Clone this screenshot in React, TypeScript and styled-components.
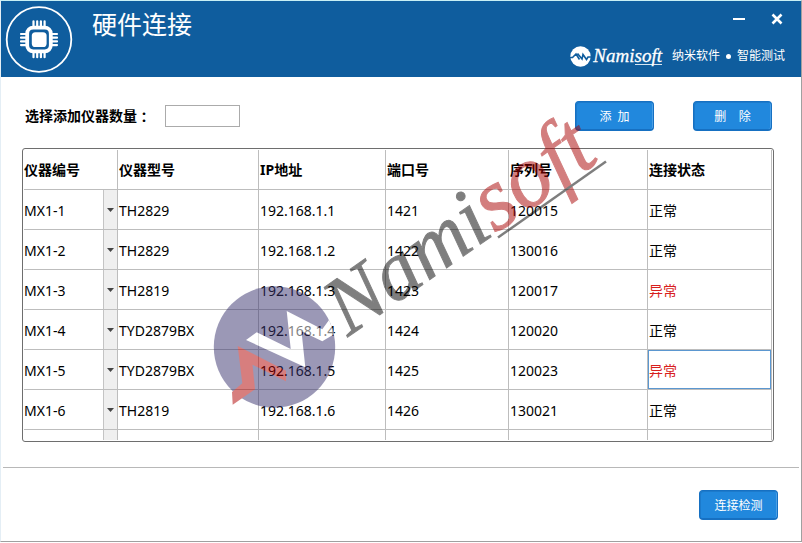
import React from 'react';
import styled, { createGlobalStyle } from 'styled-components';

const GlobalStyle = createGlobalStyle`
  *, *::before, *::after { box-sizing: border-box; }
  html, body, #root { height: 100%; }
  body {
    margin: 0;
    background: #fff;
    color: #000;
    font-family: 'Noto Sans', 'Noto Sans CJK SC', sans-serif;
    font-size: 14px;
    line-height: 20px;
  }
  button, input, select { font: inherit; color: inherit; margin: 0; padding: 0; }
`;

const Window = styled.div`
  position: relative;
  display: flex;
  flex-direction: column;
  min-height: calc(100% - 1px);
  border: 1px solid #a0a0a0;
  border-top-color: #c8f0f5;
  border-left-color: #e4eef5;
`;

const TitleBar = styled.header`
  display: flex;
  justify-content: space-between;
  height: 76px;
  padding: 4px 16px 4px 4px;
  background: #0f5d9e;
  color: #fff;
`;

const Heading = styled.div`
  display: flex;
  gap: 19px;
`;

const Title = styled.h1`
  margin: 3px 0 0;
  font-size: 25px;
  font-weight: 400;
  line-height: 32px;
`;

const TitleSide = styled.div`
  display: flex;
  flex-direction: column;
  justify-content: space-between;
  align-items: flex-end;
`;

const WindowControls = styled.div`
  display: flex;
  gap: 22px;
  padding-top: 6px;
`;

const WindowControl = styled.button`
  display: flex;
  width: 16px;
  height: 16px;
  border: 0;
  background: none;
  color: #fff;
`;

const Brand = styled.div`
  display: flex;
  align-items: center;
  height: 24px;
  margin-bottom: 5px;
  font-size: 12px;
`;

const BrandName = styled.span`
  margin: 0 10px 0 2px;
  font-family: 'Liberation Serif', serif;
  font-size: 19px;
  font-style: italic;
  line-height: 20px;
  -webkit-text-stroke: 0.3px #fff;
`;

const BrandTail = styled.span`
  display: inline-block;
  height: 19px;
  border-bottom: 1px solid #d5e5f2;
`;

const Dot = styled.span`
  width: 5px;
  height: 5px;
  margin: 0 6px;
  border-radius: 50%;
  background: #fff;
`;

const Content = styled.main`
  flex: 1;
  padding: 24px 27px 0 21px;
`;

const Toolbar = styled.div`
  display: flex;
  align-items: center;
  justify-content: space-between;
  padding: 0 2px 0 3px;
`;

const Field = styled.label`
  display: flex;
  align-items: center;
  font-weight: 700;
`;

const Colon = styled.span`
  margin-right: 14px;
  font-family: 'Noto Sans CJK TC', sans-serif;
`;

const CountInput = styled.input`
  width: 75px;
  height: 22px;
  padding: 0 4px;
  border: 1px solid #ababab;
  background: #fff;
  font-weight: 400;
`;

const ButtonGroup = styled.div`
  display: flex;
  gap: 39px;
`;

const ActionButton = styled.button`
  width: 79px;
  height: 30px;
  padding-top: 2px;
  border: 1px solid #1670c2;
  border-bottom-width: 2px;
  border-radius: 4px;
  background: #2188dd;
  box-shadow: inset 1px 1px 0 #1c7acb, inset -1px 0 0 #4a9fe6;
  color: #fff;
  font-size: 12px;
  line-height: 18px;
  white-space: pre;
`;

const TableFrame = styled.div`
  height: 294px;
  margin-top: 17px;
  padding: 1px;
  overflow: hidden;
  border: 1px solid #6e6e6e;
  border-radius: 3px;
`;

const Table = styled.table`
  width: 100%;
  table-layout: fixed;
  border-collapse: separate;
  border-spacing: 0;
`;

const Column = styled.col<{ $width: number }>`
  width: ${(p) => p.$width}px;
`;

const HeadCell = styled.th`
  height: 40px;
  padding: 0 1px;
  border: solid #bdbdbd;
  border-width: 0 1px 1px 0;
  text-align: left;
  font-weight: 700;

  &:first-child { padding-left: 0; }
`;

const Cell = styled.td<{ $error?: boolean; $selected?: boolean }>`
  height: 40px;
  padding: 2px 1px 0;
  border: solid #bdbdbd;
  border-width: 0 1px 1px 0;
  color: ${(p) => (p.$error ? '#d81e1e' : '#000')};
  box-shadow: ${(p) => (p.$selected ? 'inset 0 0 0 1px #5b97d0' : 'none')};
`;

const PlainCell = styled(Cell)`
  padding: 0;
`;

const SpareCell = styled(PlainCell)`
  height: 10px;
  border-bottom: 0;
`;

const Picker = styled.div`
  display: grid;
  grid-template-columns: 1fr 14px;
  height: 39px;
`;

const PickerSelect = styled.select`
  grid-area: 1 / 1 / 2 / 3;
  padding: 2px 14px 0 0;
  appearance: none;
  border: 0;
  border-radius: 0;
  background: transparent;
`;

const PickerArrow = styled.span`
  grid-area: 1 / 2;
  display: flex;
  align-items: center;
  justify-content: center;
  border-left: 1px solid #c4c4c4;
  background: #efefef;
  pointer-events: none;
`;

const SpareArrow = styled.div`
  width: 14px;
  height: 10px;
  margin-left: auto;
  border-left: 1px solid #c4c4c4;
  background: #efefef;
`;

const Footer = styled.footer`
  display: flex;
  justify-content: flex-end;
  margin: 0 2px;
  padding: 22px 21px 21px;
  border-top: 1px solid #b8b8b8;
`;

const Watermark = styled.svg`
  position: absolute;
  top: 99px;
  left: 199px;
  opacity: 0.5;
  pointer-events: none;
`;

const pins = [33.5, 37.2, 40.9, 44.6];

const ChipIcon = () => (
  <svg width="68" height="68" viewBox="5 5 68 68" fill="none" stroke="#fff" aria-hidden="true">
    <circle cx="39" cy="39.5" r="32.3" strokeWidth="1.8" />
    <rect x="27.2" y="27.7" width="23.6" height="23.6" rx="6" strokeWidth="3.8" />
    <rect x="31.8" y="32.2" width="14.8" height="14.8" rx="3.6" fill="#fff" stroke="none" />
    {pins.map((p) => (
      <path
        key={p}
        strokeWidth="2.2"
        strokeLinecap="round"
        d={`M${p} 21.3V26M${p} 53V57.2M21 ${p + 0.5}H26M52 ${p + 0.5}H57`}
      />
    ))}
  </svg>
);

const BrandIcon = () => (
  <svg width="21" height="21" viewBox="0 0 21 21" aria-hidden="true">
    <circle cx="10.5" cy="10.5" r="10.2" fill="#fff" />
    <path
      d="M0 11.5H2.5L6 8L9.5 13.500M7.500 7.500L12 13L13 8.500L16.500 13.500L18 11H21"
      fill="none"
      stroke="#0f5d9e"
      strokeWidth="1.6"
    />
  </svg>
);

const instruments = [
  { id: 'MX1-1', model: 'TH2829', ip: '192.168.1.1', port: '1421', serial: '120015', ok: true },
  { id: 'MX1-2', model: 'TH2829', ip: '192.168.1.2', port: '1422', serial: '130016', ok: true },
  { id: 'MX1-3', model: 'TH2819', ip: '192.168.1.3', port: '1423', serial: '120017', ok: false },
  { id: 'MX1-4', model: 'TYD2879BX', ip: '192.168.1.4', port: '1424', serial: '120020', ok: true },
  { id: 'MX1-5', model: 'TYD2879BX', ip: '192.168.1.5', port: '1425', serial: '120023', ok: false },
  { id: 'MX1-6', model: 'TH2819', ip: '192.168.1.6', port: '1426', serial: '130021', ok: true },
];

const columns = [
  { label: '仪器编号', width: 94 },
  { label: '仪器型号', width: 141 },
  { label: 'IP地址', width: 127 },
  { label: '端口号', width: 123 },
  { label: '序列号', width: 139 },
  { label: '连接状态', width: 124 },
];

export default function App() {
  return (
    <>
      <GlobalStyle />
      <Window>
        <TitleBar>
          <Heading>
            <ChipIcon />
            <Title>硬件连接</Title>
          </Heading>
          <TitleSide>
            <WindowControls>
              <WindowControl type="button" aria-label="最小化">
                <svg width="16" height="16" viewBox="0 0 16 16" aria-hidden="true">
                  <rect x="2" y="7" width="12" height="2" fill="currentColor" />
                </svg>
              </WindowControl>
              <WindowControl type="button" aria-label="关闭">
                <svg width="16" height="16" viewBox="0 0 16 16" aria-hidden="true">
                  <path d="M3.5 3.5L12.5 12.5M12.5 3.5L3.5 12.5" stroke="currentColor" strokeWidth="2.6" />
                </svg>
              </WindowControl>
            </WindowControls>
            <Brand>
              <BrandIcon />
              <BrandName>
                Nami<BrandTail>soft</BrandTail>
              </BrandName>
              <span>纳米软件</span>
              <Dot />
              <span>智能测试</span>
            </Brand>
          </TitleSide>
        </TitleBar>

        <Content>
          <Toolbar>
            <Field>
              选择添加仪器数量<Colon>：</Colon>
              <CountInput type="text" />
            </Field>
            <ButtonGroup>
              <ActionButton type="button">{'添  加'}</ActionButton>
              <ActionButton type="button">{'删    除'}</ActionButton>
            </ButtonGroup>
          </Toolbar>

          <TableFrame>
            <Table>
              <colgroup>
                {columns.map((c) => (
                  <Column key={c.label} $width={c.width} />
                ))}
              </colgroup>
              <thead>
                <tr>
                  {columns.map((c) => (
                    <HeadCell key={c.label} scope="col">
                      {c.label}
                    </HeadCell>
                  ))}
                </tr>
              </thead>
              <tbody>
                {instruments.map((row) => (
                  <tr key={row.id}>
                    <PlainCell>
                      <Picker>
                        <PickerSelect aria-label="仪器编号" defaultValue={row.id}>
                          {instruments.map((i) => (
                            <option key={i.id}>{i.id}</option>
                          ))}
                        </PickerSelect>
                        <PickerArrow>
                          <svg width="7" height="4" viewBox="0 0 7 4" aria-hidden="true">
                            <path d="M0 0H7L3.5 4Z" fill="#444" />
                          </svg>
                        </PickerArrow>
                      </Picker>
                    </PlainCell>
                    <Cell>{row.model}</Cell>
                    <Cell>{row.ip}</Cell>
                    <Cell>{row.port}</Cell>
                    <Cell>{row.serial}</Cell>
                    <Cell $error={!row.ok} $selected={row.id === 'MX1-5'}>
                      {row.ok ? '正常' : '异常'}
                    </Cell>
                  </tr>
                ))}
                <tr>
                  {columns.map((c, i) => (
                    <SpareCell key={c.label}>{i === 0 && <SpareArrow />}</SpareCell>
                  ))}
                </tr>
              </tbody>
            </Table>
          </TableFrame>
        </Content>

        <Footer>
          <ActionButton type="button">连接检测</ActionButton>
        </Footer>

        <Watermark width="420" height="320" viewBox="200 100 420 320" aria-hidden="true">
          <circle cx="274.5" cy="347" r="60.7" fill="#39336f" />
          <path
            d="M246 340L256.7 332.3L290.7 349L286.7 311L322.3 329.3L329 320L334.5 334L322.3 341.3L301.5 331.3L305.3 367.3Z"
            fill="#fff"
          />
          <path
            d="M237.7 346L286 370.7V381.3L252.5 364.7L255 389.3L232.7 404.7L232 392L242.3 383.3Z"
            fill="#b00000"
          />
          <text
            transform="translate(348 337) rotate(-35)"
            fontFamily="'Liberation Serif', serif"
            fontStyle="italic"
            fontSize="83"
            fill="#000"
            stroke="#000"
            strokeWidth="1"
          >
            Nami
            <tspan fontSize="89" fill="#a80000" stroke="#a80000">
              soft
            </tspan>
          </text>
          <path d="M498 237.500L606 161.500" stroke="#000" strokeWidth="2.500" />
        </Watermark>
      </Window>
    </>
  );
}
